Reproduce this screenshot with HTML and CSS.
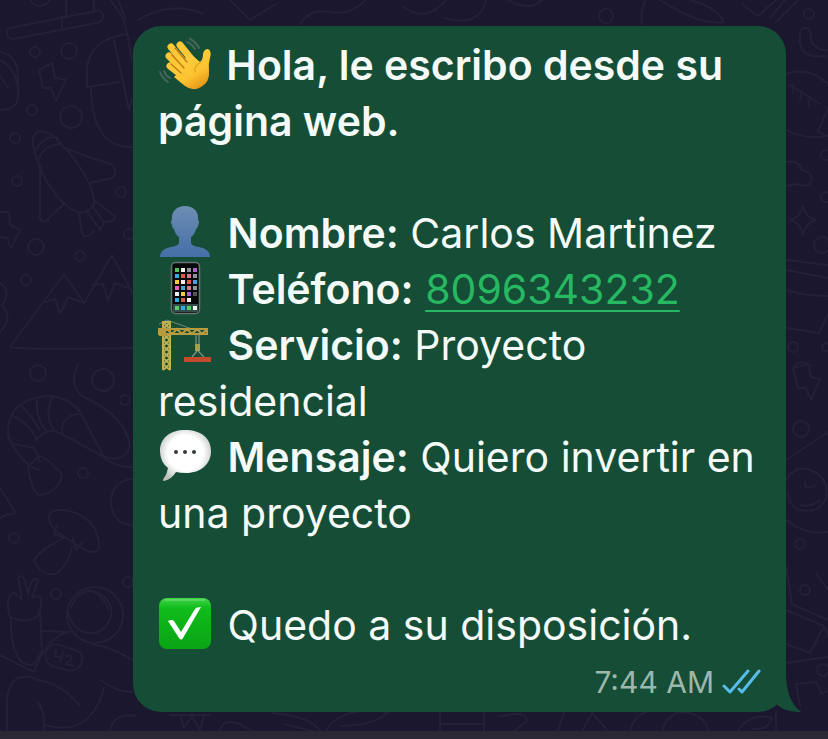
FILE: index.html
```html
<!DOCTYPE html>
<html lang="es">
	<head>
		<meta charset="utf-8" />
		<meta name="viewport" content="width=device-width, initial-scale=1">
		<title>Chat</title>
		<link rel="stylesheet" href="styles.css">
	</head>

	<body>
		<!-- doodle wallpaper -->
		<svg class="wallpaper" viewBox="0 0 828 739" preserveAspectRatio="xMidYMid slice" aria-hidden="true">
			<!-- left side -->
			<path d="M10 28L96 11Q104 10 103 17Q102 22 96 23L14 39Q7 39 7 33Q7 29 10 28zM66 0V16M94 0V11M30 0Q39 12 50 0M62 16V28"/>
			<path d="M110 0Q124 15 127 33L132 60M118 0L126 20M127 34Q88 40 87 70V87L120 82M114 40L129 110L132 100M91 88Q92 148 132 147"/>
			<path d="M0 52Q17 55 18 75V97Q17 110 0 110M0 60Q15 68 17 85M0 76L8 88"/>
			<path d="M39 70L52 63L55 78L66 80L56 101L51 88L43 88z"/>
			<path d="M33 145C30 126 50 128 61 144C78 160 96 190 94 205C88 214 79 214 70 208C55 198 38 172 33 145zM35 150Q45 134 58 138M39 158Q46 144 61 144M64 148L110 164Q120 170 112 178L90 183M40 166V218Q44 226 50 217L65 203M79 212L82 234Q88 240 94 230M86 210L100 230L104 222L92 206M95 201L115 216Q116 222 104 222"/>
			<path d="M0 212H9L10 225L20 230L11 248L7 238L0 237"/>
			<path d="M10 347L64 274L84 303L112 255L132 292M10 347Q20 350 132 348M43 303L55 299L60 314L68 297L84 303M92 285L103 284L108 300L115 283L128 288M0 283Q12 290 2 305Q14 318 0 332"/>
			<path d="M78 364Q68 385 82 396Q126 416 130 446Q124 464 102 456L62 434M79 410L104 457M62 434Q60 416 79 414M40 470Q22 466 8 436Q6 400 46 396Q68 396 80 412M28 466L40 456L50 462L62 474Q60 490 42 495Q32 496 28 466zM14 444L34 448L40 462M12 415Q30 424 36 438M22 406Q34 420 40 430M37 400Q36 420 46 430M52 398Q44 416 54 430M36 440Q48 426 62 434M98 454Q116 468 132 467"/>
			<path d="M49 515Q54 507 73 512Q100 522 99 548Q95 556 82 548L57 532Q48 524 49 515zM57 525L54 534L64 538M64 538Q42 548 34 560Q40 576 56 574Q68 566 72 548M73 538L76 550L82 542"/>
			<path d="M132 479Q110 482 111 505Q114 524 132 525M0 488L14 510Q16 516 8 514L0 518"/>
			<path d="M10 617Q4 598 14 592L22 600L18 578Q24 570 28 594Q32 574 38 580L32 598Q42 592 41 606Q40 622 20 620Q12 618 10 617zM11 618Q10 650 22 662Q34 672 42 650L40 612M0 655L34 672Q48 634 70 632L42 631"/>
			<circle cx="95" cy="615" r="28"/><path d="M71 608Q78 588 96 592Q114 600 111 616Q106 634 88 633Q72 630 68 612M86 589Q104 594 108 610M92 644Q114 648 132 660"/>
			<path d="M46 652Q50 642 60 645L78 651Q86 656 80 666Q74 672 66 670L52 666Q44 662 46 652zM56 650L55 656L62 658M63 652L60 662M66 656Q74 654 71 660L66 664L73 666"/>
			<path d="M7 739V700Q10 668 38 680Q62 684 80 706M38 702Q46 712 44 739M45 725Q90 738 104 688M100 680Q116 692 132 692M110 739Q108 712 136 716"/>
			<!-- right side -->
			<path d="M770 18L785 0M776 22L798 0M801 30Q794 60 826 56M801 30Q812 22 811 42Q820 52 828 50"/>
			<path d="M786 74Q808 66 828 84M786 130Q804 140 828 136L818 132L828 108M790 85L820 104M794 84L792 94M802 90L800 100M811 96L808 106"/>
			<path d="M786 162Q800 160 801 170Q814 172 811 182Q808 188 796 184L786 186M803 206Q806 218 816 220Q806 222 803 235Q800 222 790 220Q800 218 803 206z"/>
			<path d="M786 260L828 265M786 270L828 278M786 290Q806 296 828 296M787 328L819 333L828 314M794 366Q802 358 811 366"/>
			<path d="M793 368L808 364L811 377L820 379L811 400L806 388L798 388z"/>
			<path d="M786 460L828 432M786 480Q796 464 810 470Q830 478 826 498Q820 514 800 510Q788 506 788 492M805 481Q804 492 815 485M800 505Q810 508 820 500M786 520Q806 536 828 532"/>
			<path d="M786 566L792 604L828 620M786 610L824 626L810 653L786 644M824 626L828 636M816 573L828 590M786 663L828 657M796 684L816 682L822 694L828 690M796 684L800 706"/>
			<!-- strips above and below the bubble -->
			<path d="M138 20Q170 0 204 14M230 0L250 20L276 4M300 24Q310 8 330 12T366 0M402 6Q426 24 446 0M444 18Q480 28 486 0M508 0Q530 12 542 0M642 24Q640 10 646 0M660 0Q700 26 724 22Q718 8 690 0M742 4L758 16L776 0"/>
			<path d="M170 715H210M180 715L184 728L192 716L200 730L204 716M220 731Q222 718 240 724L252 731M272 713Q310 716 320 731M284 724L312 731M326 731Q340 706 388 712Q374 726 340 726M440 712V731M484 712V731M440 724H484M500 716Q530 710 526 722L514 731M564 712L558 731M582 731L592 713L608 731M630 731Q634 716 646 712M662 731Q666 716 680 712Q706 714 708 731M738 731Q750 712 772 718Q768 731 752 729M776 712V731"/>
			<g>
				<circle cx="35" cy="52" r="5"/><circle cx="69" cy="51" r="8"/><circle cx="32" cy="110" r="5"/>
				<circle cx="71" cy="117" r="11"/><circle cx="15" cy="138" r="5"/><circle cx="17" cy="181" r="5"/>
				<circle cx="121" cy="192" r="5"/><circle cx="129" cy="234" r="5"/><circle cx="36" cy="247" r="8"/>
				<circle cx="80" cy="256" r="5"/><circle cx="26" cy="280" r="5"/><circle cx="38" cy="373" r="8"/>
				<circle cx="103" cy="380" r="11"/><circle cx="125" cy="400" r="5"/><circle cx="83" cy="473" r="5"/>
				<circle cx="14" cy="538" r="5"/><circle cx="128" cy="582" r="5"/><circle cx="56" cy="594" r="5"/>
				<circle cx="606" cy="16" r="7"/><circle cx="809" cy="14" r="5"/><circle cx="826" cy="155" r="5"/>
				<circle cx="826" cy="197" r="5"/><circle cx="822" cy="245" r="8"/><circle cx="793" cy="347" r="5"/>
				<circle cx="826" cy="347" r="4"/><circle cx="801" cy="429" r="8"/><circle cx="800" cy="544" r="5"/>
				<circle cx="805" cy="590" r="5"/><circle cx="823" cy="670" r="6"/>
			</g>
		</svg>

		<main class="chat">
			<article class="bubble">
				<p><strong><svg class="emoji" viewBox="0 0 54 52" role="img" aria-label="👋">
					<defs>
						<linearGradient id="skin" x1="0" y1="0" x2="0.6" y2="1">
							<stop offset="0" stop-color="#ffd54c"/><stop offset="0.7" stop-color="#fcc32f"/><stop offset="1" stop-color="#e89b1c"/>
						</linearGradient>
					</defs>
					<path d="M32 0Q38 3 41 9M29 3Q34 5 37 10M2 33Q4 39 10 43M6 32Q8 37 12 39" fill="none" stroke="#45665c" stroke-width="2" stroke-linecap="round"/>
					<g fill="none" stroke="#fdc938" stroke-width="7" stroke-linecap="round">
						<path d="M13 8L30 28M22 6L38 26M11 17L28 34M12 27L26 38"/>
					</g>
					<path d="M22 22L34 16L42 23Q45 21 45 15Q46 10 50 10Q54 12 52 19Q50 25 51 32Q52 43 43 48Q35 53 27 47L16 38L22 32L18 26z" fill="url(#skin)"/>
					<path d="M17 9L29 23M14 16L26 29M13 25L23 34" fill="none" stroke="#c77c12" stroke-width="1.5" stroke-linecap="round"/>
					<path d="M42 24Q36 26 37 33" fill="none" stroke="#e2a022" stroke-width="1.3" stroke-linecap="round"/>
				</svg> Hola, le escribo desde su página web.</strong></p>

				<p class="gap"><svg class="emoji" viewBox="0 0 54 52" role="img" aria-label="👤">
					<defs>
						<linearGradient id="person" x1="0" y1="0" x2="0" y2="1">
							<stop offset="0" stop-color="#6d8db2"/><stop offset="1" stop-color="#456fa8"/>
						</linearGradient>
					</defs>
					<path d="M27 -1C36 -1 41 5 40 13Q42 14 40 19Q39 22 38 22Q37 27 33 30V36Q34 39 41 40Q52 42 52 50H2Q2 42 13 40Q20 39 21 36V30Q17 27 16 22Q14 21 14 18Q12 14 14 13C13 5 18 -1 27 -1z" fill="url(#person)"/>
				</svg> <strong>Nombre:</strong> Carlos Martinez</p>

				<p><svg class="emoji" viewBox="0 0 54 52" role="img" aria-label="📱">
					<rect x="13.5" y="-0.5" width="28" height="51" rx="4" fill="#080a0b" stroke="#687570" stroke-width="1.5"/>
					<path d="M17 5h4v4h-4z" fill="#55c45e"/>
					<path d="M23 5h4v4h-4zM23 17h4v4h-4zM17 29h4v4h-4zM29 35h4v4h-4z" fill="#f1f1ee"/>
					<path d="M29 5h4v4h-4zM35 23h4v4h-4zM35 11h4v4h-4z" fill="#8f939b"/>
					<path d="M35 5h4v4h-4zM29 29h4v4h-4z" fill="#a66ac4"/>
					<path d="M17 11h4v4h-4zM23 23h4v4h-4zM17 35h4v4h-4zM35 17h4v4h-4z" fill="#38a8de"/>
					<path d="M23 11h4v4h-4zM29 17h4v4h-4zM23 35h4v4h-4z" fill="#df594b"/>
					<path d="M29 11h4v4h-4zM29 23h4v4h-4z" fill="#d5798c"/>
					<path d="M17 17h4v4h-4zM23 29h4v4h-4z" fill="#f1cc3d"/>
					<path d="M17 23h4v4h-4z" fill="#e063bc"/>
					<path d="M35 29h4v4h-4z" fill="#555"/>
					<path d="M15 41h25v8h-25z" fill="#354d4a"/>
					<path d="M17 43h4v4h-4zM29 43h4v4h-4z" fill="#58cc69"/>
					<path d="M23 43h4v4h-4z" fill="#38a8de"/>
					<path d="M35 43h4v4h-4z" fill="#f1f1ee"/>
				</svg> <strong>Teléfono:</strong> <a href="tel:8096343232">8096343232</a></p>

				<p><svg class="emoji" viewBox="0 0 54 52" role="img" aria-label="🏗️">
					<path d="M9 1L1 5M9 1L34 10" fill="none" stroke="#71877d" stroke-width="1"/>
					<path d="M5 51V3H12V51M5 15L12 21L5 27L12 33L5 39L12 45L5 51M12 15L5 21L12 27L5 33L12 39L5 45L12 51M5 3L12 10M12 3L5 10" fill="none" stroke="#c5ae4b" stroke-width="2"/>
					<path d="M1 10H49V15H1zM4 15L9 10L14 15L19 10L24 15L29 10L34 15L39 10L44 15L49 10" fill="none" stroke="#b89b40" stroke-width="2"/>
					<path d="M1 11h7v6H1z" fill="#b69b3d"/>
					<path d="M38 16V26M41 16V26M39 32L34 38M40 32L46 38" fill="none" stroke="#819489" stroke-width="1.2"/>
					<path d="M37 25h5v7h-5z" fill="#a5a04c"/>
					<path d="M26 38H53V43H26z" fill="#c34a2c"/>
				</svg> <strong>Servicio:</strong> Proyecto residencial</p>

				<p><svg class="emoji" viewBox="0 0 54 52" role="img" aria-label="💬">
					<defs>
						<radialGradient id="speech" cx="0.5" cy="0.45" r="0.58">
							<stop offset="0.6" stop-color="#fff"/><stop offset="1" stop-color="#b9c0bd"/>
						</radialGradient>
					</defs>
					<path d="M27 -1C43 -1 53 7 53 20S43 42 28 42Q22 42 18 41Q14 48 6 50Q4 50 6 47Q9 43 10 37Q2 31 2 20C2 7 12 -1 27 -1z" fill="url(#speech)"/>
					<circle cx="18" cy="21" r="2" fill="#333b39"/><circle cx="27" cy="21" r="2" fill="#333b39"/><circle cx="36" cy="21" r="2" fill="#333b39"/>
				</svg> <strong>Mensaje:</strong> Quiero invertir en una proyecto</p>

				<p class="gap"><svg class="emoji" viewBox="0 0 54 52" role="img" aria-label="✅">
					<defs>
						<linearGradient id="tick" x1="0" y1="0" x2="0" y2="1">
							<stop offset="0" stop-color="#42d34a"/><stop offset="0.2" stop-color="#0fbd1b"/><stop offset="1" stop-color="#0aa414"/>
						</linearGradient>
					</defs>
					<rect x="1" y="-1" width="52" height="51" rx="8" fill="url(#tick)"/>
					<path d="M7 1H47" stroke="#77e27b" stroke-width="1" stroke-linecap="round"/>
					<path d="M10 22Q14 20 16 22L23 33L37 10Q38 8 43 8L25 39Q23 42 21 39z" fill="#fff"/>
				</svg> Quedo a su disposición.</p>

				<footer class="meta">
					<time datetime="07:44">7:44 AM</time>
					<svg class="read" viewBox="0 0 40 26" role="img" aria-label="Leído">
						<path d="M2 17L8 23L26 2M17 20L20 23L37 2"/>
					</svg>
				</footer>

				<svg class="tail" viewBox="0 0 40 40" aria-hidden="true">
					<path d="M24 0C24 18 28 31 39 40C29 40 21 38 14 32L10 0z"/>
				</svg>
			</article>
		</main>

		<div class="bottom-bar"></div>
	</body>
</html>
```
FILE: styles.css
```css
*{
	box-sizing: border-box;
}

body{
	margin: 0;
	min-height: 100vh;
	display: flex;
	flex-direction: column;
	position: relative;
	background-color: #1a172e;
	font-family: Inter, "Liberation Sans", sans-serif;
	color: #f4faf7;
}

.wallpaper{
	position: absolute;
	top: 0;
	left: 0;
	width: 100%;
	height: 100%;
	z-index: -1;
	fill: none;
	stroke: #232037;
	stroke-width: 2;
	stroke-linejoin: round;
	stroke-linecap: round;
}

.chat{
	flex: 1;
	padding: 26px 42px 19px 133px;
}

.bubble{
	position: relative;
	padding: 11px 24px 12px 25px;
	border-radius: 28px;
	background-color: #154d37;
	font-size: 41px;
	line-height: 56px;
}

.bubble p{
	margin: 0;
}

.bubble .gap{
	margin-top: 56px;
}

.bubble strong{
	font-weight: 600;
}

.bubble a{
	color: #27b862;
	text-decoration: underline;
	text-decoration-thickness: 2px;
	text-underline-offset: 6px;
}

.emoji{
	width: 54px;
	height: 52px;
	margin-right: 4px;
	vertical-align: -11px;
	overflow: visible;
}

.meta{
	display: flex;
	justify-content: flex-end;
	align-items: center;
	gap: 8px;
	margin-top: 11px;
	font-size: 30px;
	line-height: 36px;
	color: #9db8aa;
}

.read{
	width: 40px;
	height: 26px;
	fill: none;
	stroke: #55bde8;
	stroke-width: 3;
	stroke-linecap: round;
	stroke-linejoin: round;
}

.tail{
	position: absolute;
	right: -16px;
	bottom: 0;
	width: 40px;
	height: 40px;
	fill: #154d37;
}

.bottom-bar{
	height: 8px;
	background-color: #2a2835;
}
```
